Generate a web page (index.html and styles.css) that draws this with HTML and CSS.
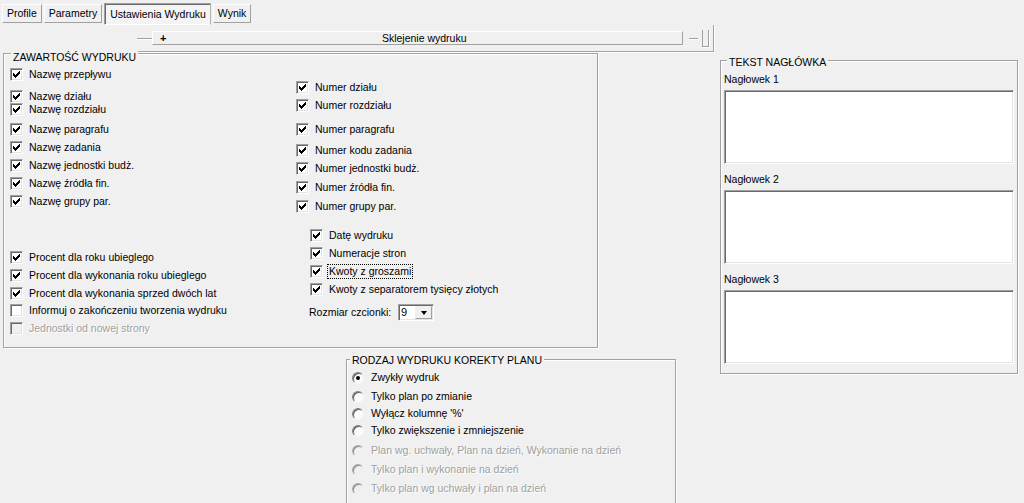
FILE: index.html
```html
<!DOCTYPE html>
<html lang="pl">
<head>
<meta charset="utf-8">
<title>Ustawienia Wydruku</title>
<link rel="stylesheet" href="styles.css">
</head>
<body>
<div class="tabs">
  <div class="tab">Profile</div>
  <div class="tab">Parametry</div>
  <div class="tab tab-active">Ustawienia Wydruku</div>
  <div class="tab">Wynik</div>
</div>

<div class="toolbar">
  <span class="tb-dash"></span>
  <div class="tb-bar">
    <span class="tb-plus">+</span>
    <span class="tb-title">Sklejenie wydruku</span>
  </div>
  <span class="tb-dash tb-dash-small"></span>
  <span class="tb-grip"></span>
</div>

<div class="main">
  <div class="left">
    <div class="group g-content">
      <span class="legend">ZAWARTOŚĆ WYDRUKU</span>
      <div class="col-a">
        <div class="chk"><span class="box"><svg class="tick" viewBox="0 0 11 11"><polygon points="8,2 9,2 9,5 8,5 8,6 7,6 7,7 6,7 6,8 5,8 5,9 4,9 4,8 3,8 3,7 2,7 2,4 3,4 3,5 4,5 4,6 5,6 5,5 6,5 6,4 7,4 7,3 8,3"/></svg></span>Nazwę przepływu</div>
        <div class="chk gap9"><span class="box"><svg class="tick" viewBox="0 0 11 11"><polygon points="8,2 9,2 9,5 8,5 8,6 7,6 7,7 6,7 6,8 5,8 5,9 4,9 4,8 3,8 3,7 2,7 2,4 3,4 3,5 4,5 4,6 5,6 5,5 6,5 6,4 7,4 7,3 8,3"/></svg></span>Nazwę działu</div>
        <div class="chk gap0"><span class="box"><svg class="tick" viewBox="0 0 11 11"><polygon points="8,2 9,2 9,5 8,5 8,6 7,6 7,7 6,7 6,8 5,8 5,9 4,9 4,8 3,8 3,7 2,7 2,4 3,4 3,5 4,5 4,6 5,6 5,5 6,5 6,4 7,4 7,3 8,3"/></svg></span>Nazwę rozdziału</div>
        <div class="chk gap7"><span class="box"><svg class="tick" viewBox="0 0 11 11"><polygon points="8,2 9,2 9,5 8,5 8,6 7,6 7,7 6,7 6,8 5,8 5,9 4,9 4,8 3,8 3,7 2,7 2,4 3,4 3,5 4,5 4,6 5,6 5,5 6,5 6,4 7,4 7,3 8,3"/></svg></span>Nazwę paragrafu</div>
        <div class="chk"><span class="box"><svg class="tick" viewBox="0 0 11 11"><polygon points="8,2 9,2 9,5 8,5 8,6 7,6 7,7 6,7 6,8 5,8 5,9 4,9 4,8 3,8 3,7 2,7 2,4 3,4 3,5 4,5 4,6 5,6 5,5 6,5 6,4 7,4 7,3 8,3"/></svg></span>Nazwę zadania</div>
        <div class="chk"><span class="box"><svg class="tick" viewBox="0 0 11 11"><polygon points="8,2 9,2 9,5 8,5 8,6 7,6 7,7 6,7 6,8 5,8 5,9 4,9 4,8 3,8 3,7 2,7 2,4 3,4 3,5 4,5 4,6 5,6 5,5 6,5 6,4 7,4 7,3 8,3"/></svg></span>Nazwę jednostki budż.</div>
        <div class="chk"><span class="box"><svg class="tick" viewBox="0 0 11 11"><polygon points="8,2 9,2 9,5 8,5 8,6 7,6 7,7 6,7 6,8 5,8 5,9 4,9 4,8 3,8 3,7 2,7 2,4 3,4 3,5 4,5 4,6 5,6 5,5 6,5 6,4 7,4 7,3 8,3"/></svg></span>Nazwę źródła fin.</div>
        <div class="chk"><span class="box"><svg class="tick" viewBox="0 0 11 11"><polygon points="8,2 9,2 9,5 8,5 8,6 7,6 7,7 6,7 6,8 5,8 5,9 4,9 4,8 3,8 3,7 2,7 2,4 3,4 3,5 4,5 4,6 5,6 5,5 6,5 6,4 7,4 7,3 8,3"/></svg></span>Nazwę grupy par.</div>
        <div class="chk gap43"><span class="box"><svg class="tick" viewBox="0 0 11 11"><polygon points="8,2 9,2 9,5 8,5 8,6 7,6 7,7 6,7 6,8 5,8 5,9 4,9 4,8 3,8 3,7 2,7 2,4 3,4 3,5 4,5 4,6 5,6 5,5 6,5 6,4 7,4 7,3 8,3"/></svg></span>Procent dla roku ubieglego</div>
        <div class="chk"><span class="box"><svg class="tick" viewBox="0 0 11 11"><polygon points="8,2 9,2 9,5 8,5 8,6 7,6 7,7 6,7 6,8 5,8 5,9 4,9 4,8 3,8 3,7 2,7 2,4 3,4 3,5 4,5 4,6 5,6 5,5 6,5 6,4 7,4 7,3 8,3"/></svg></span>Procent dla wykonania roku ubieglego</div>
        <div class="chk"><span class="box"><svg class="tick" viewBox="0 0 11 11"><polygon points="8,2 9,2 9,5 8,5 8,6 7,6 7,7 6,7 6,8 5,8 5,9 4,9 4,8 3,8 3,7 2,7 2,4 3,4 3,5 4,5 4,6 5,6 5,5 6,5 6,4 7,4 7,3 8,3"/></svg></span>Procent dla wykonania sprzed dwóch lat</div>
        <div class="chk gap4"><span class="box"></span>Informuj o zakończeniu tworzenia wydruku</div>
        <div class="chk disabled"><span class="box"></span>Jednostki od nowej strony</div>
      </div>
      <div class="col-b">
        <div class="sub">
          <div class="chk"><span class="box"><svg class="tick" viewBox="0 0 11 11"><polygon points="8,2 9,2 9,5 8,5 8,6 7,6 7,7 6,7 6,8 5,8 5,9 4,9 4,8 3,8 3,7 2,7 2,4 3,4 3,5 4,5 4,6 5,6 5,5 6,5 6,4 7,4 7,3 8,3"/></svg></span>Numer działu</div>
          <div class="chk"><span class="box"><svg class="tick" viewBox="0 0 11 11"><polygon points="8,2 9,2 9,5 8,5 8,6 7,6 7,7 6,7 6,8 5,8 5,9 4,9 4,8 3,8 3,7 2,7 2,4 3,4 3,5 4,5 4,6 5,6 5,5 6,5 6,4 7,4 7,3 8,3"/></svg></span>Numer rozdziału</div>
          <div class="chk gap11"><span class="box"><svg class="tick" viewBox="0 0 11 11"><polygon points="8,2 9,2 9,5 8,5 8,6 7,6 7,7 6,7 6,8 5,8 5,9 4,9 4,8 3,8 3,7 2,7 2,4 3,4 3,5 4,5 4,6 5,6 5,5 6,5 6,4 7,4 7,3 8,3"/></svg></span>Numer paragrafu</div>
          <div class="chk gap8"><span class="box"><svg class="tick" viewBox="0 0 11 11"><polygon points="8,2 9,2 9,5 8,5 8,6 7,6 7,7 6,7 6,8 5,8 5,9 4,9 4,8 3,8 3,7 2,7 2,4 3,4 3,5 4,5 4,6 5,6 5,5 6,5 6,4 7,4 7,3 8,3"/></svg></span>Numer kodu zadania</div>
          <div class="chk"><span class="box"><svg class="tick" viewBox="0 0 11 11"><polygon points="8,2 9,2 9,5 8,5 8,6 7,6 7,7 6,7 6,8 5,8 5,9 4,9 4,8 3,8 3,7 2,7 2,4 3,4 3,5 4,5 4,6 5,6 5,5 6,5 6,4 7,4 7,3 8,3"/></svg></span>Numer jednostki budż.</div>
          <div class="chk gap6"><span class="box"><svg class="tick" viewBox="0 0 11 11"><polygon points="8,2 9,2 9,5 8,5 8,6 7,6 7,7 6,7 6,8 5,8 5,9 4,9 4,8 3,8 3,7 2,7 2,4 3,4 3,5 4,5 4,6 5,6 5,5 6,5 6,4 7,4 7,3 8,3"/></svg></span>Numer źródła fin.</div>
          <div class="chk gap6"><span class="box"><svg class="tick" viewBox="0 0 11 11"><polygon points="8,2 9,2 9,5 8,5 8,6 7,6 7,7 6,7 6,8 5,8 5,9 4,9 4,8 3,8 3,7 2,7 2,4 3,4 3,5 4,5 4,6 5,6 5,5 6,5 6,4 7,4 7,3 8,3"/></svg></span>Numer grupy par.</div>
        </div>
        <div class="sub sub-opt">
          <div class="chk"><span class="box"><svg class="tick" viewBox="0 0 11 11"><polygon points="8,2 9,2 9,5 8,5 8,6 7,6 7,7 6,7 6,8 5,8 5,9 4,9 4,8 3,8 3,7 2,7 2,4 3,4 3,5 4,5 4,6 5,6 5,5 6,5 6,4 7,4 7,3 8,3"/></svg></span>Datę wydruku</div>
          <div class="chk"><span class="box"><svg class="tick" viewBox="0 0 11 11"><polygon points="8,2 9,2 9,5 8,5 8,6 7,6 7,7 6,7 6,8 5,8 5,9 4,9 4,8 3,8 3,7 2,7 2,4 3,4 3,5 4,5 4,6 5,6 5,5 6,5 6,4 7,4 7,3 8,3"/></svg></span>Numeracje stron</div>
          <div class="chk"><span class="box"><svg class="tick" viewBox="0 0 11 11"><polygon points="8,2 9,2 9,5 8,5 8,6 7,6 7,7 6,7 6,8 5,8 5,9 4,9 4,8 3,8 3,7 2,7 2,4 3,4 3,5 4,5 4,6 5,6 5,5 6,5 6,4 7,4 7,3 8,3"/></svg></span><span class="focus">Kwoty z groszami</span></div>
          <div class="chk"><span class="box"><svg class="tick" viewBox="0 0 11 11"><polygon points="8,2 9,2 9,5 8,5 8,6 7,6 7,7 6,7 6,8 5,8 5,9 4,9 4,8 3,8 3,7 2,7 2,4 3,4 3,5 4,5 4,6 5,6 5,5 6,5 6,4 7,4 7,3 8,3"/></svg></span>Kwoty z separatorem tysięcy złotych</div>
          <div class="size-row">
            <span class="size-label">Rozmiar czcionki:</span>
            <div class="combo"><span class="combo-val">9</span><span class="combo-btn"></span></div>
          </div>
        </div>
      </div>
    </div>

    <div class="group g-radio">
      <span class="legend">RODZAJ WYDRUKU KOREKTY PLANU</span>
      <div class="opt"><span class="radio on"></span>Zwykły wydruk</div>
      <div class="opt gap6"><span class="radio"></span>Tylko plan po zmianie</div>
      <div class="opt"><span class="radio"></span>Wyłącz kolumnę '%'</div>
      <div class="opt"><span class="radio"></span>Tylko zwiększenie i zmniejszenie</div>
      <div class="opt disabled gap7"><span class="radio"></span>Plan wg. uchwały, Plan na dzień, Wykonanie na dzień</div>
      <div class="opt disabled gap6"><span class="radio"></span>Tylko plan i wykonanie na dzień</div>
      <div class="opt disabled gap6"><span class="radio"></span>Tylko plan wg uchwały i plan na dzień</div>
    </div>
  </div>

  <div class="group g-header">
    <span class="legend">TEKST NAGŁÓWKA</span>
    <span class="hdr-label">Nagłowek 1</span>
    <textarea class="hdr-text"></textarea>
    <span class="hdr-label">Nagłowek 2</span>
    <textarea class="hdr-text"></textarea>
    <span class="hdr-label">Nagłowek 3</span>
    <textarea class="hdr-text"></textarea>
  </div>
</div>
</body>
</html>
```

FILE: styles.css
```css
* { box-sizing: border-box; }
html, body { margin: 0; padding: 0; }
body {
  width: 1024px;
  height: 503px;
  overflow: hidden;
  background: #f0f0f0;
  color: #000;
  font-family: "Liberation Sans", Arial, sans-serif;
  font-size: 10.5px;
  line-height: 13px;
}

/* ---------- tabs ---------- */
.tabs {
  display: flex;
  align-items: flex-start;
  gap: 2px;
  height: 25px;
  padding: 3px 0 0 2px;
}
.tab {
  height: 19px;
  margin-top: 1px;
  padding: 0 4px;
  line-height: 17px;
  border: 1px solid;
  border-color: #fff #a0a0a0 #a0a0a0 #fff;
  white-space: nowrap;
}
.tab-active {
  height: 22px;
  margin-top: 0;
  padding: 1px 4px 0 5px;
  line-height: 18px;
  border-color: #a0a0a0 #b4b4b4 #fff #a0a0a0;
  box-shadow: inset 1px 1px 0 #696969;
  background: #f4f4f4;
}

/* ---------- splitter toolbar ---------- */
.toolbar {
  display: flex;
  align-items: center;
  width: 589px;
  height: 27px;
  margin-left: 125px;
  border-right: 1px solid #a0a0a0;
  border-bottom: 1px solid #a0a0a0;
  box-shadow: 1px 1px 0 #fff;
}
.tb-dash {
  flex: none;
  width: 15px;
  height: 1px;
  margin-left: 12px;
  background: #a0a0a0;
  box-shadow: 0 1px 0 #fff;
}
.tb-dash-small {
  width: 9px;
  margin-left: 6px;
}
.tb-bar {
  flex: none;
  display: flex;
  align-items: center;
  width: 531px;
  height: 14px;
  border: 1px solid;
  border-color: #fff #a0a0a0 #a0a0a0 #fff;
}
.tb-plus {
  margin-left: 7px;
  font-weight: bold;
  font-size: 11px;
  line-height: 11px;
}
.tb-title {
  flex: 1;
  text-align: center;
  line-height: 12px;
}
.tb-grip {
  flex: none;
  width: 7px;
  height: 17px;
  margin-left: 4px;
  border: 1px solid #a0a0a0;
  border-top: none;
  box-shadow: 1px 1px 0 #fff;
}

/* ---------- layout ---------- */
.main {
  display: flex;
  align-items: flex-start;
}
.left {
  flex: none;
  width: 717px;
}

/* ---------- group boxes ---------- */
.group {
  position: relative;
  border: 1px solid #a0a0a0;
  box-shadow: inset 1px 1px 0 #fff, 1px 1px 0 #fff;
}
.legend {
  position: absolute;
  top: -5px;
  left: 7px;
  padding: 0 2px;
  background: #f0f0f0;
  line-height: 13px;
  white-space: nowrap;
}

.g-content {
  display: flex;
  width: 595px;
  height: 295px;
  margin: 1px 0 0 3px;
}
.g-content .legend { top: -3px; }
.col-a {
  flex: none;
  display: flex;
  flex-direction: column;
  width: 292px;
  padding: 14px 0 0 6px;
}
.col-b {
  display: flex;
  flex-direction: column;
  padding-top: 27px;
}
.sub {
  display: flex;
  flex-direction: column;
}
.sub-opt {
  margin: 16px 0 0 14px;
}

/* ---------- checkboxes ---------- */
.chk {
  display: flex;
  align-items: center;
  height: 13px;
  white-space: nowrap;
}
.chk + .chk { margin-top: 5px; }
.chk.gap0 { margin-top: 0; }
.chk.gap4 { margin-top: 4px; }
.chk.gap6 { margin-top: 6px; }
.chk.gap7 { margin-top: 7px; }
.chk.gap8 { margin-top: 8px; }
.chk.gap9 { margin-top: 9px; }
.chk.gap11 { margin-top: 11px; }
.chk.gap43 { margin-top: 43px; }

.box {
  flex: none;
  width: 13px;
  height: 13px;
  margin-right: 6px;
  border: 1px solid;
  border-color: #a0a0a0 #fff #fff #a0a0a0;
  box-shadow: inset 1px 1px 0 #696969, inset -1px -1px 0 #e3e3e3;
  background: #fff;
}
.tick {
  display: block;
  width: 11px;
  height: 11px;
  fill: #000;
  shape-rendering: crispEdges;
}
.disabled {
  color: #a0a0a0;
  text-shadow: 1px 1px 0 #fff;
}
.disabled .box {
  background: #f0f0f0;
}
.focus {
  outline: 1px dotted #000;
  outline-offset: 0;
  padding: 0 1px;
  margin-left: -1px;
}

/* ---------- font size combo ---------- */
.size-row {
  display: flex;
  align-items: center;
  height: 17px;
  margin: 8px 0 0 -1px;
}
.size-label {
  width: 89px;
  white-space: nowrap;
}
.combo {
  display: flex;
  align-items: center;
  width: 36px;
  height: 17px;
  border: 1px solid;
  border-color: #a0a0a0 #fff #fff #a0a0a0;
  box-shadow: inset 1px 1px 0 #696969, inset -1px -1px 0 #e3e3e3;
  background: #fff;
}
.combo-val {
  flex: 1;
  padding-left: 2px;
  font-size: 11px;
}
.combo-btn {
  display: flex;
  align-items: center;
  justify-content: center;
  width: 17px;
  height: 13px;
  margin-right: 1px;
  border: 1px solid;
  border-color: #f0f0f0 #a0a0a0 #a0a0a0 #f0f0f0;
  background: #f0f0f0;
}
.combo-btn::after {
  content: "";
  border-top: 4px solid #000;
  border-left: 3px solid transparent;
  border-right: 3px solid transparent;
}

/* ---------- radio group ---------- */
.g-radio {
  width: 330px;
  height: 160px;
  margin: 11px 0 0 346px;
  padding: 11px 0 0 5px;
}
.g-radio .legend { left: 3px; top: -6px; }
.opt {
  display: flex;
  align-items: center;
  height: 13px;
  white-space: nowrap;
}
.opt + .opt { margin-top: 4px; }
.opt.gap6 { margin-top: 6px; }
.opt.gap7 { margin-top: 7px; }
.radio {
  position: relative;
  flex: none;
  width: 12px;
  height: 12px;
  margin-right: 7px;
  border-radius: 50%;
  border: 1px solid;
  border-color: #808080 #f4f4f4 #f4f4f4 #808080;
  box-shadow: inset 1px 1px 0 #5a5a5a;
  background: #fbfbfb;
}
.disabled .radio {
  border-color: #a8a8a8 #f0f0f0 #f0f0f0 #a8a8a8;
  box-shadow: inset 1px 1px 0 #8c8c8c;
  background: #f0f0f0;
}
.radio.on::after {
  content: "";
  position: absolute;
  left: 3px;
  top: 3px;
  width: 4px;
  height: 4px;
  border-radius: 50%;
  background: #000;
}

/* ---------- header text group ---------- */
.g-header {
  flex: none;
  width: 298px;
  height: 314px;
  margin: 8px 0 0 3px;
  padding: 12px 3px 0 3px;
}
.g-header .legend { left: 6px; }
.hdr-label {
  display: block;
  height: 13px;
  margin-bottom: 4px;
  white-space: nowrap;
}
.hdr-text {
  display: block;
  width: 290px;
  height: 74px;
  margin: 0 0 9px;
  padding: 0;
  resize: none;
  border: 1px solid;
  border-color: #a0a0a0 #fff #fff #a0a0a0;
  box-shadow: inset 1px 1px 0 #696969, inset -1px -1px 0 #e3e3e3;
  background: #fff;
  font: inherit;
  outline: none;
}
```
